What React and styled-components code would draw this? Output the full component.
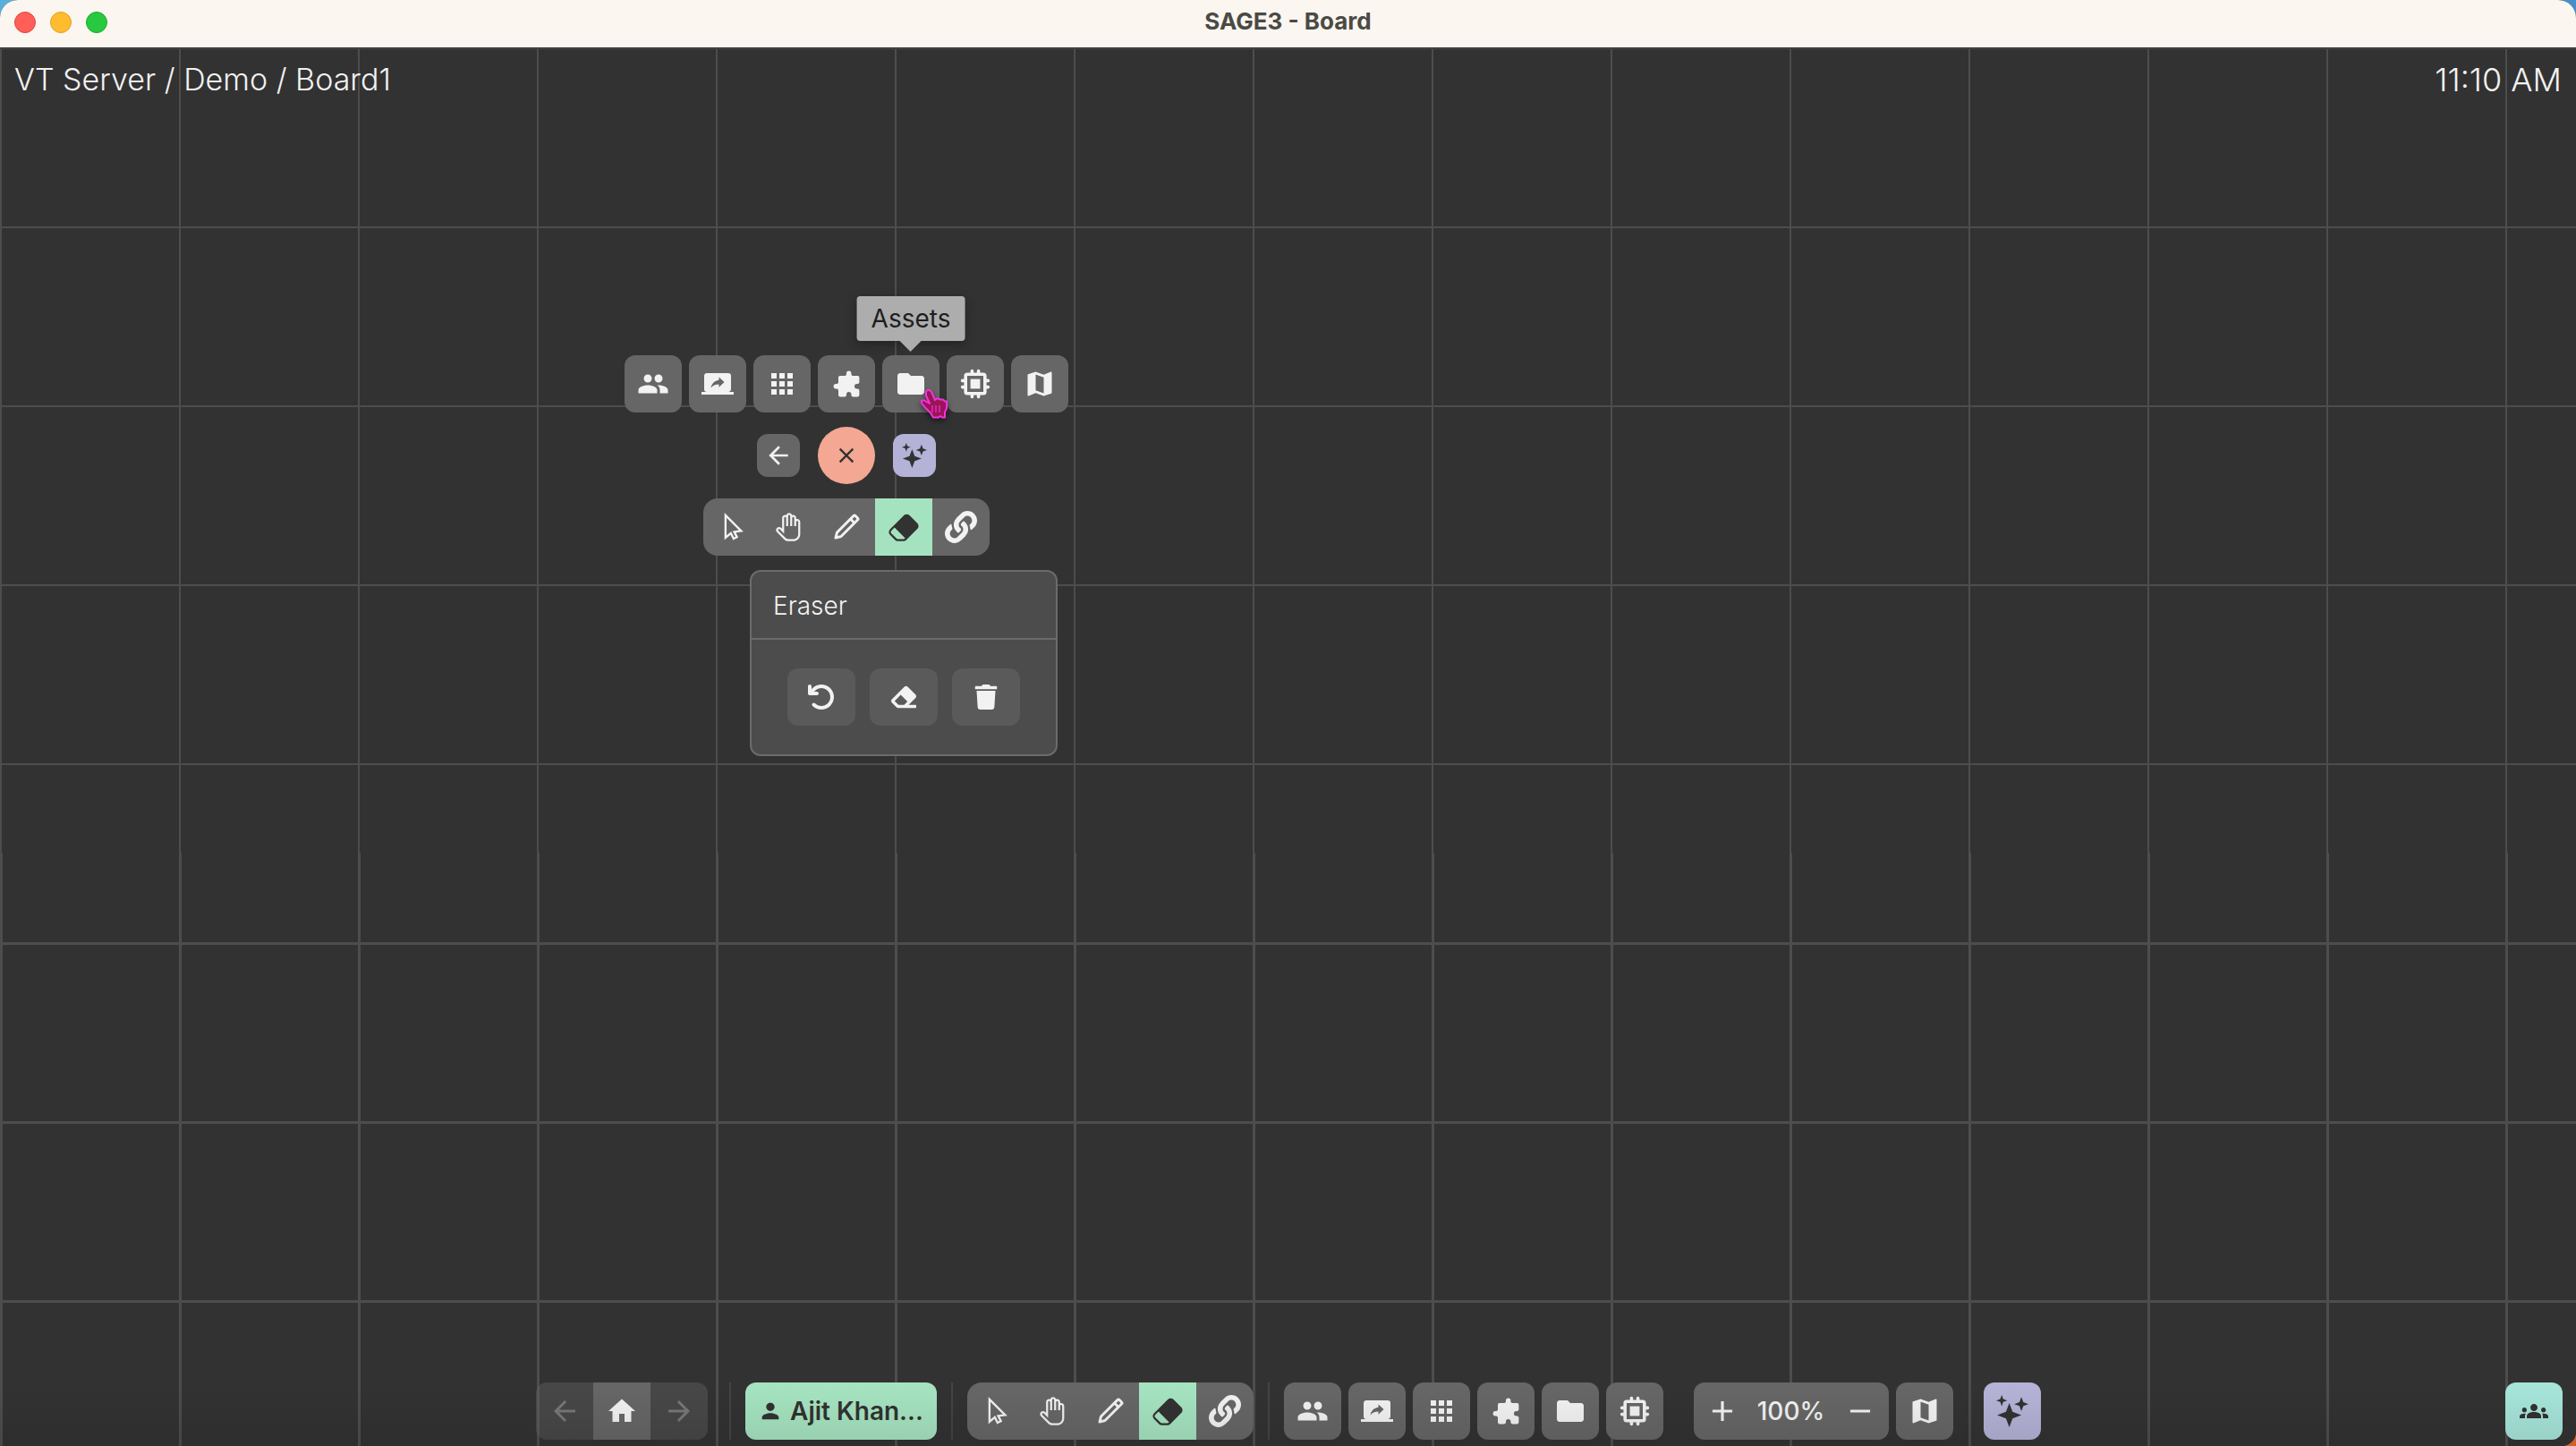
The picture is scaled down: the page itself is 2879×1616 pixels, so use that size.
import React from 'react';
import styled, { createGlobalStyle } from 'styled-components';
import { MdPeople, MdScreenShare, MdApps, MdFolder, MdMap, MdArrowBack, MdArrowForward, MdClose, MdHome, MdPerson, MdAdd, MdRemove, MdGroups } from 'react-icons/md';
import { HiPuzzle, HiChip } from 'react-icons/hi';
import { IoSparklesSharp } from 'react-icons/io5';
import { LiaMousePointerSolid, LiaHandPaperSolid } from 'react-icons/lia';
import { BiPencil } from 'react-icons/bi';
import { BsEraserFill } from 'react-icons/bs';
import { FaLink, FaEraser, FaTrash } from 'react-icons/fa';
import { FaArrowRotateLeft } from 'react-icons/fa6';

const Global = createGlobalStyle`
  * { box-sizing: border-box; }
  body { margin: 0; background: linear-gradient(160deg, #5aaede, #3f86c6 50%, #d0602a); }
  body, button { font-family: Inter, "Liberation Sans", sans-serif; }
`;

const Window = styled.div`
  min-height: 100vh;
  display: flex;
  flex-direction: column;
  border-radius: 20px 20px 16px 0;
  overflow: hidden;
  background: #323232;
  color: #f2f2f2;
`;

const TitleBar = styled.header`
  display: grid;
  grid-template-columns: 1fr auto 1fr;
  align-items: center;
  height: 53px;
  padding: 0 16px 4px;
  background: #fbf6ef;
`;

const Title = styled.h1`
  margin: 0;
  padding-bottom: 2px;
  font-size: 26px;
  line-height: 32px;
  font-weight: 700;
  color: #4a4a46;
`;

const Lights = styled.div`
  display: flex;
  gap: 16px;
`;

const Light = styled.button`
  width: 24px;
  height: 24px;
  padding: 0;
  border: 1px solid ${(p) => p.$edge};
  border-radius: 50%;
  background: ${(p) => p.$fill};
`;

const Board = styled.main`
  position: relative;
  isolation: isolate;
  flex: 1;
  display: flex;
  flex-direction: column;
  justify-content: space-between;
  background-color: #323232;
  background-image:
    linear-gradient(#282828 1px, transparent 1px),
    linear-gradient(#4d4d4d 2px, transparent 2px),
    linear-gradient(90deg, #4d4d4d 2px, transparent 2px);
  background-size: 100% 100%, 200px 200px, 200px 200px;
  background-repeat: no-repeat, repeat, repeat;
  &::before {
    content: '';
    position: absolute;
    z-index: -1;
    inset: 900px 0 0;
    background-image:
      linear-gradient(#4d4d4d 3px, transparent 3px),
      linear-gradient(90deg, #4d4d4d 3px, transparent 3px);
    background-size: 200px 200px;
    background-position: 0 100px;
  }
`;

const InfoRow = styled.div`
  display: flex;
  justify-content: space-between;
  padding: 16px;
  font-size: 34px;
  line-height: 40px;
  font-weight: 300;
  time { font-size: 36px; }
`;

const Palette = styled.section`
  position: absolute;
  left: 698px;
  top: 344px;
  display: flex;
  flex-direction: column;
  align-items: center;
  gap: 16px;
`;

const Row = styled.div`
  display: flex;
  align-items: center;
  gap: ${(p) => p.$gap || 8}px;
`;

const tones = {
  grey: ['#666666', '#f2f2f2'],
  soft: ['#5a5a5a', '#f2f2f2'],
  green: ['#a5e3c0', '#323232'],
  purple: ['#b4b2d6', '#323232'],
  coral: ['#f4a793', '#323232'],
  teal: ['#a6e4d9', '#323232'],
  faint: ['rgba(102, 102, 102, 0.4)', '#777777'],
};

const IconButton = styled.button`
  position: relative;
  display: flex;
  align-items: center;
  justify-content: center;
  width: ${(p) => p.$w || 64}px;
  height: ${(p) => p.$h || 64}px;
  padding: 0;
  border: 0;
  border-radius: ${(p) => (p.$round ? '50%' : '12px')};
  background: ${(p) => tones[p.$tone || 'grey'][0]};
  color: ${(p) => tones[p.$tone || 'grey'][1]};
  flex: none;
`;

const Group = styled.div`
  display: flex;
  border-radius: ${(p) => p.$r || 16}px;
  overflow: hidden;
  & > button { border-radius: 0; }
`;

const Tooltip = styled.span`
  position: absolute;
  bottom: 80px;
  left: 50%;
  transform: translateX(-50%);
  padding: 8px 16px;
  border-radius: 4px;
  background: #adadad;
  color: #1e1e1e;
  font-size: 28px;
  line-height: 34px;
  font-weight: 400;
  box-shadow: 0 4px 12px rgba(0, 0, 0, 0.3);
  &::after {
    content: '';
    position: absolute;
    top: 100%;
    left: 50%;
    margin-left: -12px;
    border: 12px solid transparent;
    border-bottom-width: 0;
    border-top-color: #adadad;
  }
`;

const Pointer = styled.svg`
  position: absolute;
  left: 41px;
  top: 38px;
  z-index: 2;
  filter: drop-shadow(0 3px 3px rgba(0, 0, 0, 0.5));
`;

const Panel = styled.section`
  position: absolute;
  left: 838px;
  top: 584px;
  width: 344px;
  border: 2px solid #6b6b6b;
  border-radius: 12px;
  background: #4c4c4c;
`;

const PanelTitle = styled.h2`
  margin: 0;
  padding: 20px 24px 18px;
  border-bottom: 2px solid #6b6b6b;
  font-size: 28px;
  line-height: 36px;
  font-weight: 300;
`;

const PanelBody = styled.div`
  display: flex;
  justify-content: center;
  gap: 16px;
  padding: 32px 0;
`;

const Dock = styled.footer`
  position: relative;
  display: grid;
  grid-template-columns: 1fr auto 1fr;
  align-items: center;
  padding: 24px 15px 7px;
  &::after {
    content: '';
    position: absolute;
    inset: 0;
    pointer-events: none;
    background: linear-gradient(transparent 30%, rgba(0, 0, 0, 0.09));
  }
`;

const Bar = styled.nav`
  grid-column: 2;
  display: flex;
  align-items: center;
  gap: 16px;
`;

const Divider = styled.span`
  width: 2px;
  height: 64px;
  margin-left: ${(p) => (p.$wide ? 8 : 0)}px;
  background: ${(p) => (p.$hidden ? 'transparent' : '#444444')};
`;

const UserButton = styled.button`
  display: flex;
  align-items: center;
  justify-content: center;
  gap: 8px;
  width: 214px;
  height: 64px;
  padding: 0;
  border: 0;
  border-radius: 12px;
  background: #a5e3c0;
  color: #323232;
  font-size: 28px;
  font-weight: 600;
`;

const ZoomLevel = styled.button`
  width: 90px;
  height: 64px;
  padding: 0;
  border: 0;
  background: #666666;
  color: #f2f2f2;
  font-size: 28px;
  font-weight: 500;
`;

const End = styled.div`
  display: flex;
  justify-content: flex-end;
`;

function Tools() {
  return (
    <Group>
      <IconButton aria-label="Select"><LiaMousePointerSolid size={38} /></IconButton>
      <IconButton aria-label="Pan"><LiaHandPaperSolid size={36} /></IconButton>
      <IconButton aria-label="Pen"><BiPencil size={36} /></IconButton>
      <IconButton aria-label="Eraser" $tone="green"><BsEraserFill size={36} /></IconButton>
      <IconButton aria-label="Link"><FaLink size={36} /></IconButton>
    </Group>
  );
}

const menus = [
  ['Users', MdPeople],
  ['Screen share', MdScreenShare],
  ['Applications', MdApps],
  ['Plugins', HiPuzzle],
  ['Assets', MdFolder],
  ['Kernels', HiChip],
];

function HandPointer() {
  return (
    <Pointer width="32" height="34" viewBox="0 0 32 34" aria-hidden="true">
      <path
        d="M8 2.5 10 1h2l2 2 4 9 2-1.500h2l2 1h3l2 2h2v8l-2 4v6h-3l-2-1.500-2 1.500h-6l-3-5-6-6-4-5v-3h3l6 3.500-4-9z"
        fill="#9a1555"
        stroke="#f531e0"
        strokeWidth="2"
        strokeLinejoin="round"
      />
      <path d="M15 18v8M19 18v8M23 18v8" stroke="#f531e0" strokeWidth="1.2" />
    </Pointer>
  );
}

export default function App() {
  return (
    <>
      <Global />
      <Window>
        <TitleBar>
          <Lights>
            <Light aria-label="Close" $fill="#ff5f57" $edge="#e0443e" />
            <Light aria-label="Minimize" $fill="#febc2e" $edge="#dea123" />
            <Light aria-label="Zoom" $fill="#28c840" $edge="#1aab29" />
          </Lights>
          <Title>SAGE3 - Board</Title>
        </TitleBar>
        <Board>
          <InfoRow>
            <span>VT Server / Demo / Board1</span>
            <time>11:10 AM</time>
          </InfoRow>

          <Palette>
            <Row>
              {menus.map(([label, Icon]) => (
                <IconButton key={label} aria-label={label}>
                  <Icon size={36} />
                  {label === 'Assets' && <Tooltip role="tooltip">Assets</Tooltip>}
                  {label === 'Assets' && <HandPointer />}
                </IconButton>
              ))}
              <IconButton aria-label="Map"><MdMap size={36} /></IconButton>
            </Row>
            <Row $gap={20}>
              <IconButton $w={48} $h={48} aria-label="Back"><MdArrowBack size={32} /></IconButton>
              <IconButton $round $tone="coral" aria-label="Close menu"><MdClose size={28} /></IconButton>
              <IconButton $w={48} $h={48} $tone="purple" aria-label="Assistant"><IoSparklesSharp size={28} /></IconButton>
            </Row>
            <Tools />
          </Palette>

          <Panel>
            <PanelTitle>Eraser</PanelTitle>
            <PanelBody>
              <IconButton $w={76} $tone="soft" aria-label="Undo"><FaArrowRotateLeft size={32} /></IconButton>
              <IconButton $w={76} $tone="soft" aria-label="Erase mine"><FaEraser size={28} /></IconButton>
              <IconButton $w={76} $tone="soft" aria-label="Erase all"><FaTrash size={28} /></IconButton>
            </PanelBody>
          </Panel>

          <Dock>
            <Bar>
              <Group $r={12}>
                <IconButton $tone="faint" disabled aria-label="Back"><MdArrowBack size={36} /></IconButton>
                <IconButton aria-label="Home"><MdHome size={36} /></IconButton>
                <IconButton $tone="faint" disabled aria-label="Forward"><MdArrowForward size={36} /></IconButton>
              </Group>
              <Divider $wide />
              <UserButton><MdPerson size={28} />Ajit Khan...</UserButton>
              <Divider />
              <Tools />
              <Divider />
              <Row>
                {menus.map(([label, Icon]) => (
                  <IconButton key={label} aria-label={label}><Icon size={36} /></IconButton>
                ))}
              </Row>
              <Divider $hidden />
              <Row>
                <Group $r={12}>
                  <IconButton aria-label="Zoom in"><MdAdd size={38} /></IconButton>
                  <ZoomLevel>100%</ZoomLevel>
                  <IconButton aria-label="Zoom out"><MdRemove size={38} /></IconButton>
                </Group>
                <IconButton aria-label="Map"><MdMap size={36} /></IconButton>
              </Row>
              <Divider $hidden />
              <IconButton $tone="purple" aria-label="Assistant"><IoSparklesSharp size={36} /></IconButton>
            </Bar>
            <End>
              <IconButton $tone="teal" aria-label="Everyone"><MdGroups size={32} /></IconButton>
            </End>
          </Dock>
        </Board>
      </Window>
    </>
  );
}
